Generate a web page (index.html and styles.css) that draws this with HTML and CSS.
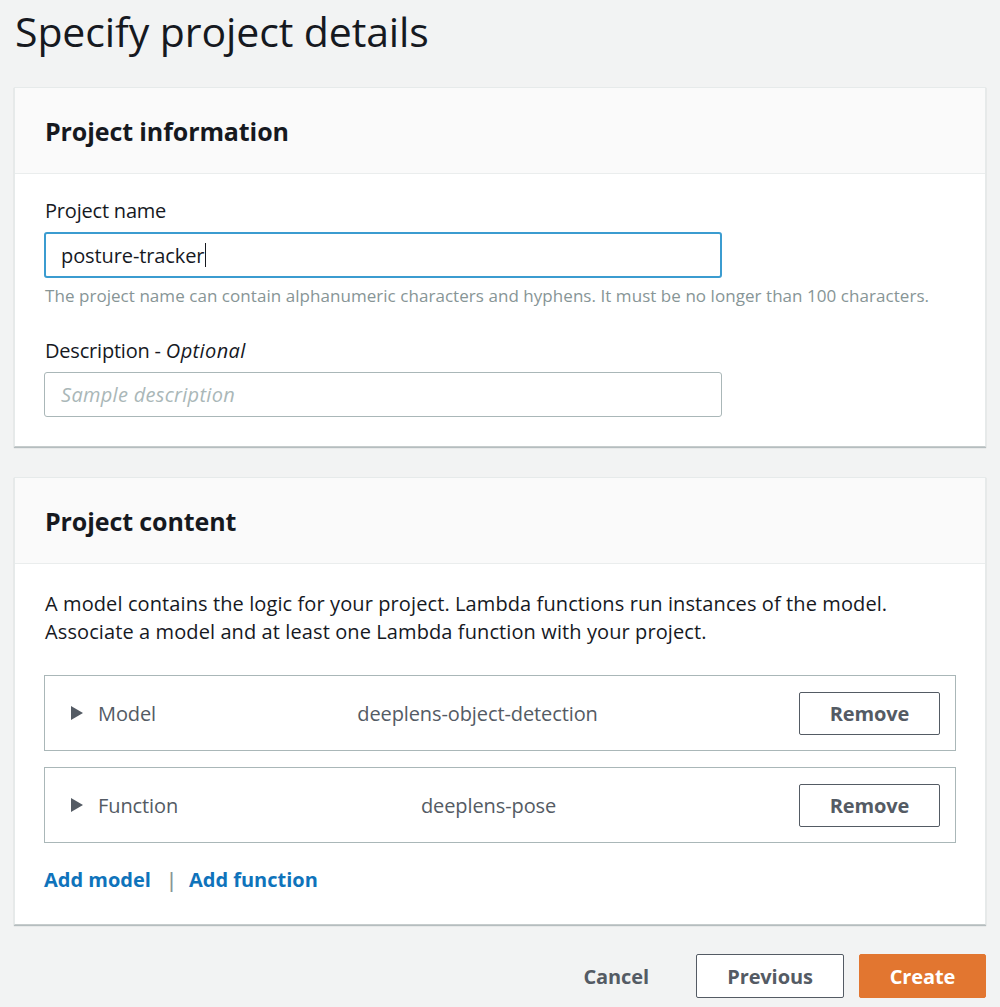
FILE: index.html
```html
<!DOCTYPE html>
<html lang="en">
<head>
<meta charset="utf-8">
<title>Specify project details</title>
<link rel="stylesheet" href="styles.css">
</head>
<body>
<main class="page">
  <h1 class="page-title">Specify project details</h1>

  <section class="panel">
    <header class="panel-header"><h2>Project information</h2></header>
    <div class="panel-body info-body">
      <div class="field">
        <label class="field-label" for="pname">Project name</label>
        <div class="input focused" id="pname"><span>posture-tracker</span><span class="caret"></span></div>
        <p class="hint">The project name can contain alphanumeric characters and hyphens. It must be no longer than 100 characters.</p>
      </div>
      <div class="field">
        <label class="field-label" for="pdesc">Description - <i>Optional</i></label>
        <div class="input" id="pdesc"><span class="placeholder">Sample description</span></div>
      </div>
    </div>
  </section>

  <section class="panel">
    <header class="panel-header"><h2>Project content</h2></header>
    <div class="panel-body content-body">
      <p class="intro">A model contains the logic for your project. Lambda functions run instances of the model.<br>Associate a model and at least one Lambda function with your project.</p>
      <div class="item-row">
        <div class="item-label"><svg class="tri" viewBox="0 0 12 14" width="12" height="14"><path d="M0 0 L12 7 L0 14 Z" fill="#545b64"/></svg><span>Model</span></div>
        <div class="item-value">deeplens-object-detection</div>
        <button class="btn btn-normal btn-row">Remove</button>
      </div>
      <div class="item-row">
        <div class="item-label"><svg class="tri" viewBox="0 0 12 14" width="12" height="14"><path d="M0 0 L12 7 L0 14 Z" fill="#545b64"/></svg><span>Function</span></div>
        <div class="item-value">deeplens-pose</div>
        <button class="btn btn-normal btn-row">Remove</button>
      </div>
      <div class="links">
        <a href="#" class="link">Add model</a>
        <span class="sep">|</span>
        <a href="#" class="link">Add function</a>
      </div>
    </div>
  </section>

  <footer class="actions">
    <button class="btn btn-link">Cancel</button>
    <button class="btn btn-normal btn-prev">Previous</button>
    <button class="btn btn-primary">Create</button>
  </footer>
</main>
</body>
</html>
```

FILE: styles.css
```css
* { box-sizing: border-box; }
html, body { margin: 0; padding: 0; }
body {
  background: #f2f3f3;
  font-family: "Open Sans", "Noto Sans", Arial, sans-serif;
  color: #16191f;
}
.page {
  padding: 0 14px;
  width: 1000px;
}
.page-title {
  margin: 0;
  padding-top: 4px;
  height: 87px;
  font-size: 41px;
  font-weight: 400;
  line-height: 54px;
  padding-left: 1px;
  color: #16191f;
  letter-spacing: -0.1px;
}
.panel {
  background: #fff;
  border: 1px solid #e6eaea;
  border-bottom-color: #c6cccc;
  box-shadow: 0 1px 1px rgba(0, 28, 36, 0.25);
  margin-bottom: 30px;
}
.panel-header {
  background: #fafafa;
  border-bottom: 1px solid #eaeded;
  height: 86px;
  padding: 0 30px;
  display: flex;
  align-items: center;
}
.panel-header h2 {
  margin: 0;
  font-size: 25px;
  font-weight: 700;
  color: #16191f;
  letter-spacing: -0.1px;
}
.panel-body { padding: 0 29px; }
.info-body { padding-top: 24px; padding-bottom: 29px; }
.field-label {
  display: block;
  font-size: 20px;
  line-height: 26px;
  color: #16191f;
  margin-bottom: 8px;
  padding-left: 1px;
  letter-spacing: -0.2px;
}
.field-label i { font-style: italic; letter-spacing: 0.4px; }
.input {
  width: 678px;
  height: 45px;
  border: 1px solid #aab7b8;
  border-radius: 3px;
  padding: 0 16px;
  display: flex;
  align-items: center;
  font-size: 20px;
  color: #16191f;
  letter-spacing: -0.1px;
}
.input.focused {
  height: 46px;
  border: 2px solid #3b9cd0;
  padding-left: 15px;
}
.caret {
  display: inline-block;
  width: 1px;
  height: 24px;
  background: #16191f;
  margin-left: 1px;
}
.placeholder { color: #aab7b8; font-style: italic; letter-spacing: 0.3px; }
.hint {
  margin: 7px 0 0 1px;
  font-size: 17px;
  line-height: 22px;
  color: #879596;
  letter-spacing: 0.05px;
}
.field + .field { margin-top: 31px; }
.content-body { padding-top: 26px; padding-bottom: 31px; }
.intro {
  margin: 0 0 29px 1px;
  font-size: 20px;
  line-height: 28px;
  color: #16191f;
  letter-spacing: 0.1px;
}
.item-row {
  border: 1px solid #aab7b8;
  height: 76px;
  padding: 0 15px 0 26px;
  display: flex;
  align-items: center;
  justify-content: space-between;
  margin-bottom: 16px;
  font-size: 20px;
  color: #545b64;
  letter-spacing: -0.1px;
}
.item-label { display: flex; align-items: center; }
.tri { margin-right: 15px; }
.btn {
  font-family: inherit;
  font-weight: 700;
  font-size: 20px;
  cursor: pointer;
  border-radius: 2px;
  letter-spacing: -0.1px;
}
.btn-normal {
  background: #fff;
  border: 1px solid #545b64;
  color: #545b64;
}
.btn-row { width: 141px; height: 43px; }
.links {
  margin-top: 24px;
  display: flex;
  align-items: center;
  font-size: 20px;
  line-height: 26px;
}
.link {
  color: #0f73bb;
  font-weight: 700;
  text-decoration: none;
}
.sep { color: #879596; margin: 0 12px 0 15px; font-weight: 600; }
.actions {
  display: flex;
  justify-content: flex-end;
  align-items: center;
  gap: 15px;
  margin-top: -1px;
}
.btn-link {
  background: none;
  border: none;
  color: #545b64;
  padding: 0 32px 0 0;
  height: 44px;
}
.btn-prev { width: 148px; height: 44px; }
.btn-primary {
  width: 127px;
  height: 44px;
  background: #e27630;
  border: 1px solid #e27630;
  color: #fff;
}
```
